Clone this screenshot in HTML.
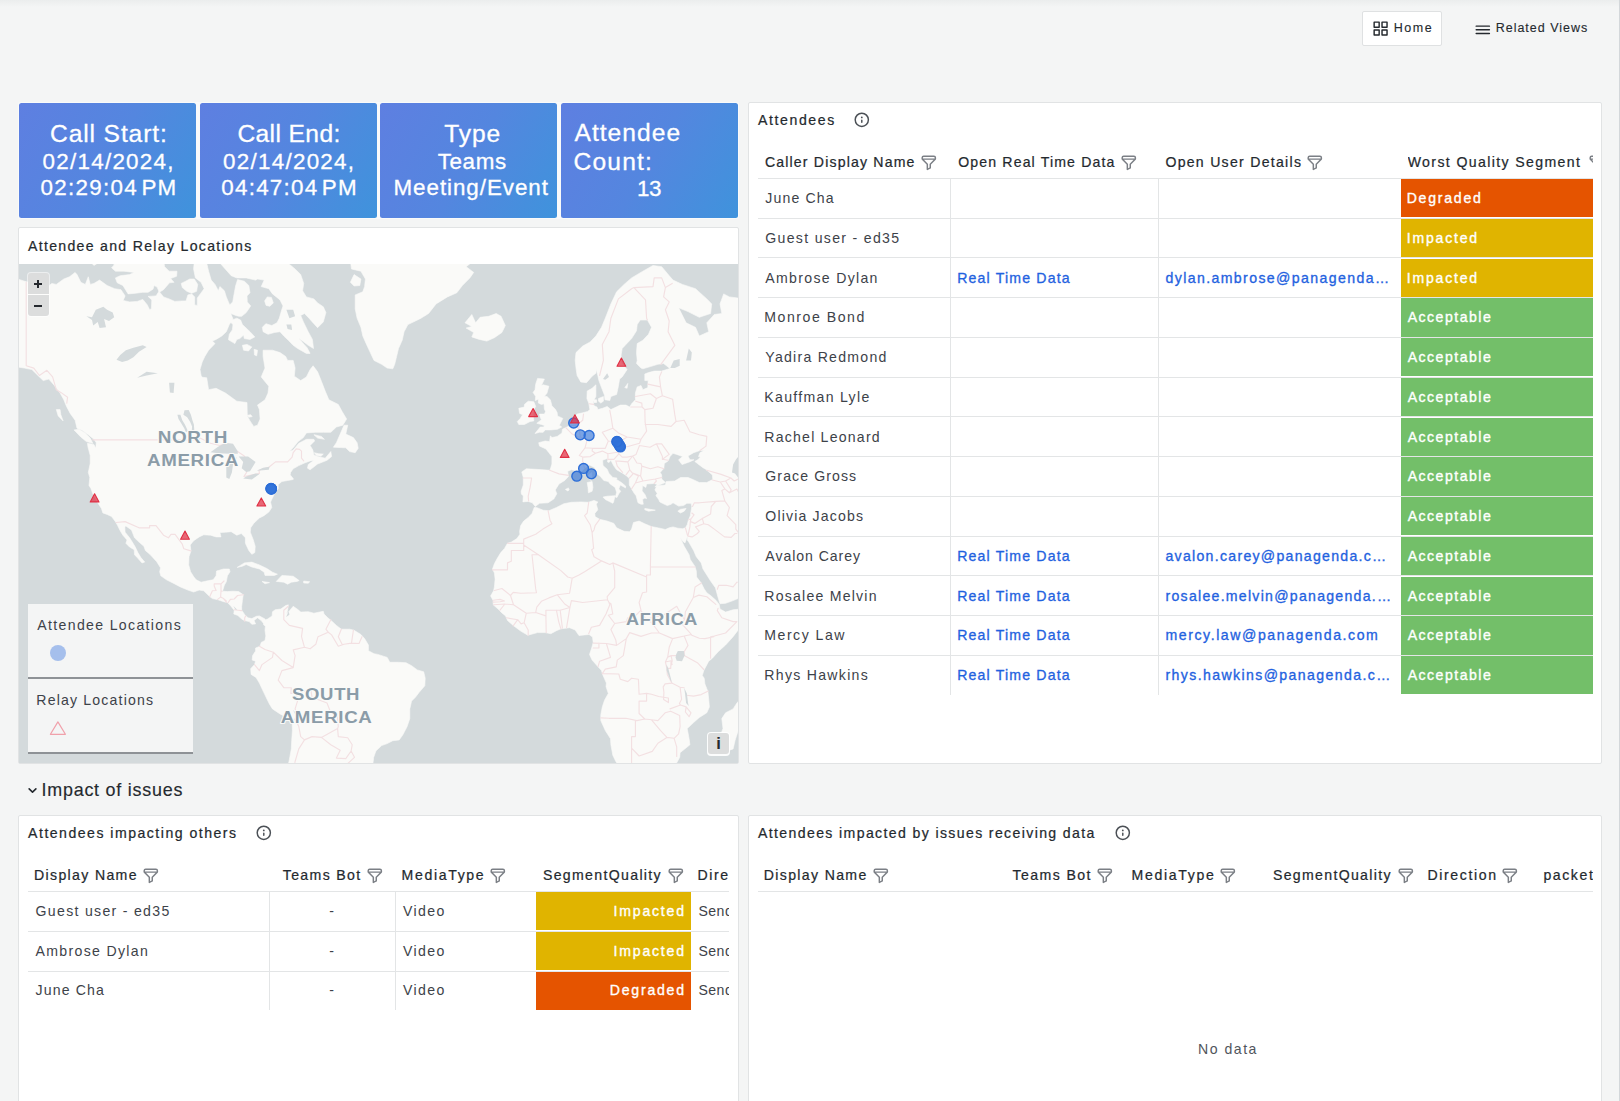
<!DOCTYPE html>
<html><head><meta charset="utf-8"><title>Call details</title>
<style>
html,body{margin:0;padding:0;}
body{width:1620px;height:1101px;overflow:hidden;background:#f4f5f5;position:relative;font-family:"Liberation Sans", sans-serif;}
.t{position:absolute;white-space:pre;display:block;}
.i{position:absolute;}
#top{position:absolute;left:0;top:0;width:1620px;height:7px;background:linear-gradient(#ebeded,#f4f5f5);}
#rs{position:absolute;left:1619px;top:0;width:1px;height:1101px;background:#d3d7da;}
</style></head><body>
<div id="top"></div><div id="rs"></div>
<div style="position:absolute;left:1362px;top:11px;width:80px;height:35px;box-sizing:border-box;background:#fff;border:1px solid #dfe1e2;border-radius:2px;"></div>
<div style="position:absolute;left:18px;top:102px;width:721px;height:117px;background:#f9fafa;border-radius:3px;"></div>
<div style="position:absolute;left:19px;top:103px;width:177px;height:115px;border-radius:2.5px;background:linear-gradient(120deg,#5e7fe1 0%,#5486df 50%,#3f93dc 100%);"></div>
<div style="position:absolute;left:200px;top:103px;width:177px;height:115px;border-radius:2.5px;background:linear-gradient(120deg,#5e7fe1 0%,#5486df 50%,#3f93dc 100%);"></div>
<div style="position:absolute;left:380.3px;top:103px;width:176.99999999999994px;height:115px;border-radius:2.5px;background:linear-gradient(120deg,#5e7fe1 0%,#5486df 50%,#3f93dc 100%);"></div>
<div style="position:absolute;left:561px;top:103px;width:177px;height:115px;border-radius:2.5px;background:linear-gradient(120deg,#5e7fe1 0%,#5486df 50%,#3f93dc 100%);"></div>
<div style="position:absolute;left:18px;top:227px;width:721px;height:537px;box-sizing:border-box;background:#fff;border:1px solid #e1e3e4;border-radius:2px;"></div>
<div style="position:absolute;left:748px;top:102px;width:854px;height:662px;box-sizing:border-box;background:#fff;border:1px solid #e1e3e4;border-radius:2px;"></div>
<div style="position:absolute;left:18px;top:815px;width:721px;height:305px;box-sizing:border-box;background:#fff;border:1px solid #e1e3e4;border-radius:2px;"></div>
<div style="position:absolute;left:748px;top:815px;width:854px;height:305px;box-sizing:border-box;background:#fff;border:1px solid #e1e3e4;border-radius:2px;"></div>
<div style="position:absolute;left:758px;top:177.90px;width:835px;height:1px;background:#e3e5e6;"></div>
<div style="position:absolute;left:1401px;top:179.00px;width:192px;height:38.35px;background:#e55400;"></div>
<div style="position:absolute;left:758px;top:217.65px;width:835px;height:1px;background:#e3e5e6;"></div>
<div style="position:absolute;left:1401px;top:218.75px;width:192px;height:38.35px;background:#e0b400;"></div>
<div style="position:absolute;left:758px;top:257.40px;width:835px;height:1px;background:#e3e5e6;"></div>
<div style="position:absolute;left:1401px;top:258.50px;width:192px;height:38.35px;background:#e0b400;"></div>
<div style="position:absolute;left:758px;top:297.15px;width:835px;height:1px;background:#e3e5e6;"></div>
<div style="position:absolute;left:1401px;top:298.25px;width:192px;height:38.35px;background:#73bf69;"></div>
<div style="position:absolute;left:758px;top:336.90px;width:835px;height:1px;background:#e3e5e6;"></div>
<div style="position:absolute;left:1401px;top:338.00px;width:192px;height:38.35px;background:#73bf69;"></div>
<div style="position:absolute;left:758px;top:376.65px;width:835px;height:1px;background:#e3e5e6;"></div>
<div style="position:absolute;left:1401px;top:377.75px;width:192px;height:38.35px;background:#73bf69;"></div>
<div style="position:absolute;left:758px;top:416.40px;width:835px;height:1px;background:#e3e5e6;"></div>
<div style="position:absolute;left:1401px;top:417.50px;width:192px;height:38.35px;background:#73bf69;"></div>
<div style="position:absolute;left:758px;top:456.15px;width:835px;height:1px;background:#e3e5e6;"></div>
<div style="position:absolute;left:1401px;top:457.25px;width:192px;height:38.35px;background:#73bf69;"></div>
<div style="position:absolute;left:758px;top:495.90px;width:835px;height:1px;background:#e3e5e6;"></div>
<div style="position:absolute;left:1401px;top:497.00px;width:192px;height:38.35px;background:#73bf69;"></div>
<div style="position:absolute;left:758px;top:535.65px;width:835px;height:1px;background:#e3e5e6;"></div>
<div style="position:absolute;left:1401px;top:536.75px;width:192px;height:38.35px;background:#73bf69;"></div>
<div style="position:absolute;left:758px;top:575.40px;width:835px;height:1px;background:#e3e5e6;"></div>
<div style="position:absolute;left:1401px;top:576.50px;width:192px;height:38.35px;background:#73bf69;"></div>
<div style="position:absolute;left:758px;top:615.15px;width:835px;height:1px;background:#e3e5e6;"></div>
<div style="position:absolute;left:1401px;top:616.25px;width:192px;height:38.35px;background:#73bf69;"></div>
<div style="position:absolute;left:758px;top:654.90px;width:835px;height:1px;background:#e3e5e6;"></div>
<div style="position:absolute;left:1401px;top:656.00px;width:192px;height:38.35px;background:#73bf69;"></div>
<div style="position:absolute;left:950px;top:179px;width:1px;height:516px;background:#e3e5e6;"></div>
<div style="position:absolute;left:1158px;top:179px;width:1px;height:516px;background:#e3e5e6;"></div>
<div style="position:absolute;left:28px;top:891.00px;width:700.8px;height:1px;background:#e3e5e6;"></div>
<div style="position:absolute;left:536px;top:892.10px;width:155px;height:38.35px;background:#e0b400;"></div>
<div style="position:absolute;left:28px;top:930.75px;width:700.8px;height:1px;background:#e3e5e6;"></div>
<div style="position:absolute;left:536px;top:931.85px;width:155px;height:38.35px;background:#e0b400;"></div>
<div style="position:absolute;left:28px;top:970.50px;width:700.8px;height:1px;background:#e3e5e6;"></div>
<div style="position:absolute;left:536px;top:971.60px;width:155px;height:38.35px;background:#e55400;"></div>
<div style="position:absolute;left:269px;top:892px;width:1px;height:118px;background:#e3e5e6;"></div>
<div style="position:absolute;left:395px;top:892px;width:1px;height:118px;background:#e3e5e6;"></div>
<div style="position:absolute;left:758px;top:891.0px;width:835px;height:1px;background:#e3e5e6;"></div>
<svg viewBox="0 0 719 499" style="position:absolute;left:19px;top:264px;width:719px;height:499px;overflow:hidden"><rect width="719" height="499" fill="#d4dadc"/>
<g fill="#fafaf8" stroke="#fafaf8" stroke-width="0.6" stroke-linejoin="round">
<path d="M-26.6,8.4L-7.8,12.8L7.2,17.8L14.8,18.8L21.5,25.2L27.9,23.6L32.8,19.4L37.3,20.4L44.8,15.0L50.5,12.8L56.1,8.4L58.0,10.6L61.8,18.3L66.3,20.4L69.3,12.8L71.2,20.4L74.9,19.4L80.6,16.1L88.1,21.5L95.6,24.7L102.0,25.7L106.1,31.9L104.2,36.4L110.6,37.9L118.2,37.4L123.8,35.4L128.3,40.9L130.6,45.7L132.4,44.8L132.8,35.9L129.1,32.4L137.0,31.9L140.0,27.3L144.5,32.9L150.1,34.9L155.8,37.4L163.3,36.9L167.0,36.9L168.9,30.9L172.7,29.9L175.7,32.9L175.7,40.9L178.3,41.4L178.3,33.9L181.3,29.9L185.1,24.7L182.1,18.3L176.4,13.9L174.6,5.0L175.3,-2.0L179.1,-8.0L182.1,-9.2L187.7,-0.8L189.6,7.2L192.2,16.1L196.0,20.4L199.4,26.8L200.9,22.6L205.4,26.8L207.3,32.9L210.7,40.9L213.7,37.9L215.5,27.8L216.7,21.5L218.6,15.6L225.3,17.2L229.8,21.5L231.0,28.8L228.0,31.9L228.3,37.9L231.7,41.9L227.2,48.6L222.7,52.3L219.7,52.3L216.7,51.4L211.8,49.5L214.0,55.1L210.3,60.6L207.3,67.7L202.8,72.0L197.1,75.4L193.4,77.1L196.0,79.6L189.6,86.2L185.8,92.5L183.2,98.0L181.0,105.6L182.1,111.5L183.2,113.3L187.7,113.7L189.6,125.7L197.1,124.3L206.5,129.1L217.8,137.2L228.0,138.5L228.3,151.9L231.0,156.9L234.7,162.4L238.5,161.2L241.1,155.0L240.4,145.6L238.5,141.1L246.0,135.8L249.0,129.1L249.8,122.2L242.2,112.9L246.0,104.1L244.1,92.5L244.1,86.2L253.5,86.2L261.0,88.6L266.7,92.5L268.6,96.4L274.2,96.4L276.1,104.1L275.3,112.2L281.7,116.6L287.4,112.9L291.1,105.6L294.1,101.8L298.6,107.8L302.4,117.3L306.2,127.1L309.9,135.8L319.3,140.4L323.1,147.5L327.6,155.0L323.8,161.2L317.4,163.0L311.8,168.3L304.3,168.3L296.8,168.3L287.4,168.9L284.4,173.6L279.1,177.6L274.6,183.2L270.4,187.6L274.2,186.0L279.8,179.3L287.4,175.3L294.9,175.3L295.6,177.0L291.1,181.5L293.8,186.0L294.9,190.9L298.6,192.6L306.2,194.2L311.8,187.6L312.6,192.6L308.0,196.3L298.6,200.0L291.1,205.8L288.5,204.2L289.2,200.6L294.9,196.3L291.1,196.9L285.5,199.0L279.8,201.6L274.2,204.8L271.6,208.4L271.2,210.9L274.2,214.5L274.2,215.5L268.6,216.5L262.9,217.5L259.2,220.5L259.2,224.9L255.8,228.3L255.0,230.7L252.0,236.9L251.6,238.3L252.8,243.5L249.8,248.1L244.9,251.7L240.4,254.0L234.7,259.4L231.7,263.8L231.3,268.2L234.3,275.9L236.2,282.3L235.8,288.6L232.8,290.3L229.8,286.5L226.4,279.3L226.4,273.8L222.3,269.5L217.8,271.2L212.2,267.7L206.5,268.2L200.9,268.6L202.0,272.9L197.1,272.9L191.5,271.2L184.7,270.8L180.2,272.9L174.6,276.8L171.2,281.0L171.9,286.9L170.0,292.7L169.7,300.9L171.6,307.8L174.9,313.0L177.2,315.8L182.1,318.2L189.6,316.6L194.1,315.8L197.1,311.8L197.5,307.0L204.6,305.0L210.3,305.0L211.0,307.8L208.4,311.8L207.3,317.8L205.4,321.0L203.5,327.2L208.4,327.6L214.0,327.2L219.7,327.6L224.2,330.7L223.4,336.6L222.7,342.3L222.7,346.2L226.1,351.2L229.1,353.8L232.8,354.6L237.4,352.3L240.4,351.9L246.0,355.0L247.1,356.9L245.2,360.3L242.2,356.5L238.5,353.8L235.1,356.5L236.6,359.9L232.8,360.3L230.2,357.6L225.3,356.5L222.7,355.0L218.9,351.5L214.8,350.0L215.2,346.2L211.4,341.6L208.4,338.5L204.6,337.7L199.0,335.8L193.4,334.6L190.4,332.3L184.7,326.8L180.2,326.1L174.6,328.0L168.9,326.1L161.4,322.9L153.9,319.0L147.5,315.8L141.8,311.8L140.7,307.8L141.5,303.8L137.7,297.7L131.3,290.7L126.4,286.5L124.9,282.3L120.0,278.1L115.5,273.8L112.5,266.0L106.9,262.0L105.8,262.9L106.1,268.2L110.6,273.8L113.3,278.1L116.3,283.1L118.9,288.6L121.9,293.6L125.7,298.1L123.0,298.9L118.2,293.6L115.5,290.7L115.2,285.7L110.6,283.1L106.9,279.3L108.0,275.9L103.9,271.2L101.2,266.8L98.6,261.6L96.7,258.0L92.6,252.6L88.1,250.4L83.9,249.0L82.4,244.4L78.7,238.8L76.8,234.6L73.8,229.8L71.9,224.4L70.0,221.5L70.8,213.5L69.3,208.4L71.2,199.5L71.2,191.5L68.9,182.7L68.5,179.3L74.9,180.4L76.8,184.3L77.2,178.7L74.9,175.3L69.3,170.7L63.6,166.5L58.0,164.2L56.1,156.3L51.2,149.4L47.5,142.4L44.8,135.8L41.1,129.1L35.4,121.5L29.8,115.1L24.2,116.6L20.4,112.9L12.9,105.6L5.4,104.1L-7.8,101.8L-11.6,96.4L-26.6,100.3Z"/>
<path d="M73.8,179.3L67.4,177.6L61.8,173.0L55.0,165.9L59.9,165.3L66.3,168.9L71.2,174.1Z"/>
<path d="M41.1,145.6L37.3,145.6L39.2,151.9L44.1,156.9L41.8,150.7Z"/>
<path d="M199.0,-3.2L212.2,11.7L217.8,13.9L227.2,13.9L236.6,16.1L238.5,15.0L245.2,16.1L242.2,22.6L249.8,24.7L253.5,29.9L257.3,32.9L261.0,35.9L264.0,41.9L262.2,47.6L260.3,54.2L258.0,58.8L252.8,61.5L246.8,59.7L243.4,63.3L244.1,67.7L249.0,70.3L255.4,68.5L261.0,67.7L264.8,72.0L269.3,76.2L274.2,81.3L278.7,84.5L287.4,89.4L291.1,89.4L288.1,83.7L283.6,78.8L279.5,74.1L283.6,77.1L289.2,81.3L294.5,84.5L293.4,75.4L289.2,67.7L284.4,57.9L281.7,51.4L285.5,49.5L290.0,54.2L294.9,59.7L298.6,63.7L304.3,57.9L306.9,48.6L304.3,42.8L298.6,38.9L294.9,34.9L287.4,32.9L283.6,26.8L284.7,19.4L281.7,10.6L276.1,5.0L270.4,0.3L264.8,-5.6L251.6,-19.1L244.1,-21.7L232.8,-30.9L217.8,-32.2L206.5,-28.2L199.0,-15.4Z"/>
<path d="M210.3,57.0L217.8,54.2L221.6,56.0L223.4,60.6L231.0,67.7L235.8,72.9L231.0,75.4L225.3,74.6L224.6,71.1L220.8,74.6L217.8,75.4L215.9,79.6L209.5,75.8L210.3,70.3L213.3,65.9L214.0,60.6Z"/>
<path d="M91.8,-4.4L95.2,0.9L92.6,3.8L96.4,7.2L105.0,7.2L115.2,8.4L110.6,10.6L101.2,11.7L96.4,13.9L98.2,18.8L103.9,21.5L109.1,29.9L116.3,29.3L123.8,28.3L129.1,28.3L134.0,25.2L135.1,21.5L138.1,23.1L140.3,28.3L144.5,25.7L150.5,18.8L155.0,18.3L151.6,14.5L157.6,12.3L158.0,7.2L150.1,7.2L145.6,2.7L144.5,-4.4L142.6,-15.4L135.1,-25.6L120.0,-19.1L108.8,-21.7L93.7,-17.9Z"/>
<path d="M65.5,-9.2L74.9,1.5L82.4,-3.2L86.2,-15.4L78.7,-34.9L67.4,-34.9Z"/>
<path d="M163.3,23.6L167.8,27.3L172.7,29.3L177.6,27.3L178.7,20.4L175.3,15.0L170.8,15.0L166.7,17.2L162.2,19.4Z"/>
<path d="M245.6,36.9L248.3,32.9L252.4,33.4L254.3,38.9L250.9,42.3L247.1,41.4Z"/>
<path d="M223.4,81.3L228.0,80.4L232.8,82.9L229.5,87.0L224.6,86.2Z"/>
<path d="M235.1,85.3L238.5,86.2L237.7,91.8L235.5,91.0Z"/>
<path d="M228.0,151.3L231.7,150.7L233.2,152.6L229.8,153.2Z"/>
<path d="M331.4,18.3L335.1,10.6L341.9,15.0L340.8,21.5L335.1,22.0Z"/>
<path d="M294.9,170.7L302.4,172.4L305.4,175.3L298.6,174.1Z"/>
<path d="M295.3,188.7L299.8,189.8L304.3,190.1L302.0,192.3L297.5,191.5Z"/>
<path d="M153.9,-3.2L165.2,-0.8L174.6,-9.2L184.0,-11.6L187.7,-21.7L176.4,-34.9L153.9,-28.2Z"/>
<path d="M326.8,-21.7L330.6,-9.2L332.5,5.0L341.9,7.2L346.4,15.0L345.6,22.6L343.8,27.8L336.2,30.9L336.2,44.8L338.1,54.2L341.9,63.3L343.8,72.0L347.5,80.4L351.3,88.6L355.0,96.4L362.6,100.3L368.2,104.1L373.8,104.8L375.7,100.3L377.6,92.5L379.5,84.5L383.2,76.2L385.1,67.7L388.9,60.6L396.4,57.0L402.0,54.2L409.6,49.5L417.1,39.9L428.4,32.9L437.8,28.8L443.4,21.5L450.9,13.9L454.7,8.4L447.2,2.7L454.7,-3.2L454.7,-21.7Z"/>
<path d="M446.0,58.8L452.8,50.5L456.6,58.8L461.1,53.3L469.7,52.3L477.2,49.5L482.1,52.3L486.3,61.5L482.9,68.5L475.4,73.7L467.8,77.1L460.3,75.4L452.8,72.9L454.7,68.5L447.2,64.1L452.8,62.4Z"/>
<path d="M314.4,183.2L317.4,178.7L321.2,170.1L325.0,161.2L328.7,161.2L326.8,170.1L334.4,173.6L338.1,178.7L339.2,184.3L336.2,188.7L330.6,187.6L326.8,183.8Z"/>
<path d="M218.2,303.4L225.3,298.9L232.8,298.1L240.4,300.9L247.9,304.6L253.5,308.2L258.4,310.2L255.4,311.4L246.0,311.4L245.2,308.2L240.4,305.0L232.8,303.0L227.2,300.5L223.4,302.2Z"/>
<path d="M257.3,317.4L262.9,311.4L267.8,311.8L274.2,312.2L280.2,316.6L278.0,317.4L272.3,318.2L268.6,320.2L264.8,318.2Z"/>
<path d="M243.0,317.4L250.5,318.6L246.0,319.8Z"/>
<path d="M284.7,317.0L290.7,317.8L289.2,319.2L284.7,319.0Z"/>
<path d="M244.5,360.7L246.8,355.7L248.6,355.0L253.1,351.9L253.5,347.7L256.2,345.8L261.8,345.0L266.7,341.6L269.3,340.8L268.6,346.2L267.4,350.0L270.4,346.9L274.2,342.3L279.8,346.2L281.7,348.1L289.2,347.7L294.9,349.2L304.3,347.3L305.0,350.0L308.8,353.8L312.6,356.9L317.4,361.4L322.3,365.2L330.6,365.2L335.1,366.3L341.9,370.5L345.6,374.6L349.4,381.0L349.4,386.7L355.0,389.7L358.8,390.4L368.2,393.4L370.8,398.3L379.5,398.3L387.0,398.7L392.6,401.7L398.3,405.9L404.7,407.8L406.2,414.2L405.8,421.8L400.2,428.3L396.4,433.3L392.6,437.1L390.8,444.9L390.8,454.6L388.1,462.6L384.0,470.6L380.2,475.9L373.8,476.7L368.2,479.6L362.6,481.6L356.9,487.0L354.7,493.3L353.9,499.7L350.2,504.0L347.5,510.5L347.5,528.4L268.6,528.4L268.6,510.5L268.6,504.0L270.4,495.4L272.3,484.9L272.7,476.7L273.4,466.6L273.1,458.6L268.6,453.9L261.0,449.9L253.5,444.9L250.5,440.2L247.1,433.3L243.4,425.6L240.4,419.1L237.0,413.4L232.1,410.4L231.7,404.7L235.5,400.6L236.6,397.2L233.2,396.1L233.6,391.6L236.6,387.0L236.6,384.0L241.1,382.2L242.2,378.4L246.0,376.5L246.8,372.0L246.0,366.3L246.4,362.2Z"/>
<path d="M763.0,29.9L744.2,29.9L725.4,34.9L710.4,32.9L704.7,29.9L701.0,39.9L702.8,49.5L695.3,50.5L687.8,58.8L689.7,67.7L680.3,72.0L676.5,63.3L667.1,58.8L659.6,43.8L669.0,47.6L680.3,53.3L691.6,49.5L692.7,39.9L687.8,34.9L676.5,24.7L663.4,20.4L654.0,16.1L650.2,11.7L642.7,2.7L634.0,1.5L623.9,7.2L612.6,13.9L605.1,20.4L597.6,27.8L591.9,39.9L586.3,54.2L582.5,63.3L576.9,72.0L571.2,77.9L563.7,82.1L557.0,88.6L556.2,96.4L557.0,104.1L558.1,111.5L561.8,118.0L567.5,118.7L573.1,112.2L576.9,109.3L577.3,105.6L578.8,111.5L579.9,116.6L582.5,123.6L585.5,131.2L585.9,135.8L590.8,136.5L591.9,132.5L597.6,130.5L599.4,122.2L600.6,115.1L603.2,112.9L608.1,105.6L602.4,98.8L602.1,91.0L603.2,84.5L607.0,80.4L612.6,74.6L617.5,66.8L618.2,60.6L621.2,56.0L628.4,56.0L632.5,63.3L629.5,70.3L623.9,76.2L618.2,79.6L617.5,88.6L618.2,96.4L617.5,99.5L622.0,104.1L623.9,104.8L631.4,102.6L638.9,100.3L644.6,99.5L651.0,104.5L642.7,107.1L635.2,107.1L629.5,108.6L625.8,110.0L625.8,116.6L629.1,116.6L628.8,123.6L623.9,125.7L622.0,121.5L618.2,122.9L616.4,129.1L616.4,135.8L612.6,139.8L610.7,143.0L607.0,141.1L601.3,141.1L591.9,145.6L588.2,142.4L583.6,144.3L578.8,145.6L578.0,143.0L575.0,141.7L574.2,137.2L576.9,132.5L576.9,125.7L576.9,120.8L573.1,124.3L568.2,127.1L567.9,134.5L569.7,139.1L570.9,145.6L568.6,147.5L563.7,148.8L558.1,150.1L555.4,152.6L553.2,158.1L550.6,161.8L546.8,163.6L543.4,165.3L543.0,168.9L538.2,172.4L532.9,173.6L531.4,171.8L530.6,177.6L526.1,177.0L519.7,178.7L520.5,182.1L526.9,184.9L529.5,188.2L532.9,192.6L532.9,200.0L531.0,206.3L524.2,205.8L516.7,205.3L507.3,204.8L502.8,207.9L504.3,213.5L504.3,221.0L502.1,227.3L502.4,230.2L504.3,231.7L503.9,237.9L509.2,237.4L513.3,238.8L516.3,242.5L520.5,239.3L529.1,238.8L534.8,235.0L537.8,229.8L536.3,225.9L540.0,220.0L545.7,216.5L549.4,212.5L548.7,207.3L552.4,205.8L557.3,206.8L562.6,207.3L565.6,204.2L570.5,201.1L575.8,203.7L576.9,208.9L581.4,212.5L584.8,216.5L589.3,217.5L591.2,220.0L596.1,223.4L597.6,228.3L596.4,233.1L597.9,233.6L599.8,229.8L601.7,227.3L599.8,224.9L601.3,221.0L606.6,223.9L606.6,222.0L602.4,218.5L597.6,215.5L597.9,214.0L593.8,213.5L590.0,209.4L588.2,205.3L584.0,201.6L583.6,196.3L588.9,194.2L588.5,197.9L590.0,198.5L591.9,196.3L594.6,201.6L597.6,205.8L603.2,208.9L607.0,211.4L610.3,214.5L610.3,221.0L612.6,224.9L615.2,229.3L617.1,231.7L619.0,238.8L622.0,240.2L624.3,240.2L623.5,235.5L625.8,234.1L627.6,234.6L626.1,230.7L623.1,226.9L623.5,221.5L626.9,223.4L627.6,220.0L635.2,219.5L638.2,220.5L635.9,223.0L638.9,221.5L646.4,218.5L642.7,215.0L642.7,210.9L641.2,208.4L644.9,204.2L645.3,199.5L649.1,196.9L651.0,192.6L654.0,189.3L657.7,190.4L663.7,192.6L659.6,195.8L663.0,200.6L670.5,197.9L675.0,195.8L670.9,195.8L669.0,192.0L674.6,188.7L681.0,186.5L685.2,186.5L681.0,188.7L679.5,192.6L681.4,193.1L678.8,195.8L675.8,197.4L678.4,199.5L684.0,203.7L686.7,205.3L693.4,210.9L693.8,215.5L687.8,218.5L680.3,218.5L672.8,215.0L669.0,213.5L661.5,213.5L655.8,217.0L647.2,217.5L646.4,221.0L640.8,221.5L637.8,222.0L635.9,225.9L638.2,229.3L637.0,231.7L639.7,235.5L640.8,237.9L643.4,239.3L648.3,241.6L652.1,240.2L654.0,238.8L659.6,242.1L664.5,241.6L667.9,239.3L672.0,239.3L672.8,242.5L672.0,247.2L671.3,251.7L669.4,256.2L668.2,260.7L666.4,263.8L663.4,264.7L658.8,264.2L654.0,262.9L650.2,263.8L646.4,265.5L640.8,264.2L632.2,262.5L625.8,259.8L620.1,257.1L614.5,258.5L612.6,265.1L610.7,267.7L605.1,267.3L597.6,263.8L594.9,259.4L588.2,257.1L580.6,255.3L576.1,252.6L575.8,249.4L578.8,245.8L577.3,240.2L578.8,237.9L575.0,236.4L569.4,238.3L561.8,237.9L552.4,238.3L544.9,239.7L537.4,243.5L529.9,246.7L524.2,246.2L517.5,243.5L515.2,243.5L513.0,249.4L509.2,253.5L504.7,257.1L501.7,261.6L500.6,267.3L500.9,270.3L497.9,274.6L492.3,278.1L488.5,279.3L485.5,284.4L481.8,288.6L478.0,294.8L475.4,299.7L473.5,305.0L475.4,309.0L476.1,315.0L475.4,322.9L474.6,326.8L471.6,331.9L474.2,336.6L474.2,340.8L479.1,345.0L482.9,348.9L486.6,351.9L488.5,356.5L494.2,361.4L501.7,367.1L508.8,371.2L518.6,368.6L526.1,368.6L531.8,369.7L537.4,366.7L541.9,364.8L550.6,363.7L556.2,366.0L560.0,371.6L565.6,370.9L570.1,370.5L573.5,373.1L574.2,378.4L572.7,384.0L570.5,390.4L573.1,396.1L578.8,402.5L582.5,406.6L583.6,410.4L587.4,419.1L587.0,422.5L589.3,429.4L585.5,436.3L583.3,442.9L581.8,450.7L581.8,456.6L586.3,466.6L591.5,474.7L591.9,480.8L593.8,491.2L596.8,497.5L599.4,501.0L601.3,506.1L605.1,514.9L605.1,533.1L654.0,533.1L654.0,505.7L660.7,493.3L661.1,488.7L670.9,480.8L670.1,474.7L668.2,464.6L674.6,458.6L680.3,453.5L687.8,448.8L690.4,442.9L689.7,435.2L688.9,427.5L685.9,419.9L685.2,414.2L683.3,411.5L684.8,406.6L686.7,402.9L689.7,397.2L693.4,394.2L699.1,387.8L706.6,381.0L714.1,372.7L719.8,365.2L725.4,355.7L729.2,348.1L729.9,342.7L721.6,345.0L714.1,345.8L706.6,348.1L701.0,345.0L700.2,340.4L697.2,336.6L691.6,331.5L687.8,328.8L685.2,324.9L682.2,319.0L677.6,313.0L677.3,307.0L675.8,302.2L671.3,295.6L670.1,290.7L665.2,282.3L662.6,276.8L660.0,269.9L661.5,273.8L663.7,277.2L666.0,278.9L667.1,275.9L668.6,271.6L668.2,275.9L669.8,278.1L674.6,286.5L677.3,292.7L682.2,298.9L684.0,305.0L687.8,311.0L691.6,317.0L696.4,323.7L698.3,330.7L700.2,337.3L701.0,339.7L706.6,339.3L714.1,336.6L721.6,333.5L729.2,329.6L733.7,326.1L744.2,321.0L763.0,303.0Z"/>
<path d="M516.0,169.5L520.5,168.3L524.2,168.3L526.1,165.9L531.8,165.9L538.5,165.3L542.7,163.0L540.4,161.2L543.8,154.4L538.5,151.9L538.2,148.8L536.6,145.6L532.9,141.7L531.4,135.8L528.0,132.5L525.4,132.5L528.0,129.1L529.9,122.2L524.2,120.8L522.4,121.5L525.4,115.1L518.6,114.4L516.7,120.1L516.0,125.7L514.1,128.4L516.7,132.5L516.3,136.5L519.4,135.2L519.4,139.1L522.4,140.4L525.0,139.8L525.4,145.0L526.5,147.5L525.4,150.1L520.5,150.1L521.2,153.2L522.4,155.7L517.8,159.3L522.4,160.5L526.1,161.8L527.2,160.5L524.2,163.0L521.2,163.0Z"/>
<path d="M514.8,156.9L514.1,150.1L514.8,145.6L516.7,142.4L514.8,137.8L509.2,137.2L505.4,140.4L505.4,143.0L499.8,144.3L500.6,149.4L503.6,150.7L501.3,154.4L498.3,157.5L499.8,160.5L505.4,160.5L511.1,157.5Z"/>
<path d="M584.0,233.1L588.2,232.2L596.1,231.7L594.6,237.9L593.8,239.3L586.3,235.5Z"/>
<path d="M568.2,218.5L573.1,217.5L573.9,223.4L573.1,227.3L569.4,228.8L569.0,223.4Z"/>
<path d="M569.7,210.9L572.7,208.4L573.1,213.5L572.0,216.5L570.1,214.5Z"/>
<path d="M625.8,244.4L631.4,245.3L636.3,246.2L629.5,247.2L625.8,245.8Z"/>
<path d="M658.8,247.2L661.5,245.3L667.1,244.4L665.2,247.2L661.5,249.0Z"/>
<path d="M546.4,225.4L549.4,223.9L550.2,225.9L548.7,226.9Z"/>
<path d="M579.5,134.5L584.4,132.5L584.4,137.2L581.8,139.1L579.5,137.2Z"/>
<path d="M574.2,135.8L577.6,135.8L577.6,138.5L575.0,138.5Z"/>
<path d="M605.8,123.6L608.8,119.4L608.1,124.3Z"/>
<path d="M722.8,433.3L726.5,446.8L723.5,452.7L719.8,464.6L716.0,476.7L714.1,484.9L708.5,487.0L702.8,484.9L700.2,474.7L704.0,464.6L702.8,454.6L706.6,448.8L714.1,444.9L717.9,439.0Z"/>
</g>
<g fill="none" stroke="#f3e0e2" stroke-width="1.15" stroke-linejoin="round" stroke-linecap="round">
<path d="M73.8,175.9L179.4,175.9L181.0,174.1L191.5,179.3L200.9,181.5L205.4,179.8L218.6,187.6L225.3,192.0L227.6,196.3L227.6,208.4L224.9,212.5L240.4,209.4L240.0,206.3L249.8,203.2L256.5,197.9L268.6,197.9L273.1,193.1L274.2,188.7L277.2,184.9L280.6,185.4L282.5,187.1L282.5,194.2L284.7,196.9M7.2,18.3L7.2,101.8L14.8,104.1L20.4,111.5L27.9,106.3L33.6,112.9L37.3,125.7L41.8,128.4L48.6,133.2L47.8,139.1M97.1,258.5L106.1,257.6L120.0,263.8L130.6,263.8L130.6,261.6L137.0,261.6L144.5,271.2L149.4,273.8L152.0,270.3L156.1,270.3L163.3,280.2L164.8,284.8L171.9,286.9M190.7,332.7L193.4,326.8L197.1,326.5L195.2,322.1L195.2,319.8L202.0,319.8L202.0,326.8L203.1,327.2M202.0,319.8L205.0,317.0M202.0,326.8L201.6,333.1L198.6,335.4M201.6,333.1L204.6,334.6L207.3,337.0M204.6,334.6L207.6,338.5M209.2,338.5L211.4,335.4L215.2,335.0L218.6,331.5L224.6,330.7M215.2,345.8L218.9,346.2L222.7,346.6M225.7,357.2L225.7,353.8L226.8,351.9M269.3,342.3L264.8,346.2L264.8,355.7L270.4,361.4L283.6,364.4L282.5,372.7L285.5,383.3M285.5,383.3L291.1,384.8L296.8,380.3L299.0,372.7L309.2,368.2L306.9,365.2L311.8,355.7M309.2,368.2L312.6,370.9L319.3,382.2L325.0,380.3L332.5,379.1L340.0,379.5L343.0,372.7M322.3,365.2L319.3,372.7L323.1,380.3M334.4,366.0L332.5,379.1M285.5,383.3L274.2,385.9L276.1,391.6L274.2,403.6L262.9,396.5L254.3,388.2L246.0,385.5L240.4,382.2M254.3,388.2L253.5,393.4L243.0,400.6L240.4,406.6L235.5,400.6M274.2,403.6L262.9,406.6L259.2,416.1L264.8,423.7L272.3,423.7L271.9,429.4L276.1,429.4M276.1,429.4L279.1,435.2L276.1,444.9L278.0,450.7L276.1,454.6L273.1,457.8M276.1,429.4L291.9,425.6L293.0,433.3L308.0,439.0L311.8,448.8L318.2,449.9L319.3,462.6L318.6,464.6M276.1,454.6L279.8,462.6L281.7,472.6L285.5,475.9L293.0,472.6L302.4,473.4L318.6,464.6M302.4,473.4L311.8,480.8L321.2,486.2L317.4,494.1L326.8,494.6L332.1,487.0L333.2,480.8L328.7,473.8L319.3,472.6L318.6,464.6M285.5,475.9L279.8,484.9L276.1,497.5L274.2,510.5M332.1,487.0L335.5,493.3L320.8,507.0M529.1,246.7L531.0,256.2L532.9,259.8L523.9,265.1L516.7,270.3L504.7,275.1L504.7,281.0M504.7,279.3L488.5,279.3M504.7,281.0L504.7,286.5L492.3,286.5L492.3,297.3L488.5,298.9L488.5,305.8L473.5,305.8M504.7,281.0L519.4,290.7L513.0,290.7L516.7,324.9L517.5,328.8L501.7,329.2L494.2,328.4L491.5,331.5M519.4,290.7L541.9,306.6L548.7,313.0L553.2,314.2L560.0,311.0L565.6,307.8L582.5,296.9M569.7,238.3L568.2,249.0L565.6,251.7L571.2,260.7L573.1,268.6L574.6,284.4L572.7,285.7L575.0,292.7L582.5,296.9M580.6,255.3L576.1,261.6L575.0,266.0L573.1,268.6M632.2,262.5L631.4,303.0L676.1,303.0M631.4,303.0L631.4,311.0L627.6,311.0L627.6,328.0L623.5,328.8L620.1,338.5L622.0,346.2L626.5,355.0M582.5,296.9L590.8,300.5L593.8,298.9L627.6,313.0M593.8,298.9L595.7,307.0L595.7,323.7L588.2,332.7L588.5,335.8L590.0,338.5L591.9,339.7M475.4,326.5L482.9,324.5L491.5,331.5L494.5,340.8L485.9,340.0L474.6,340.8M474.2,336.2L481.0,335.4L485.5,337.0L481.0,337.7L474.2,338.1M481.0,346.2L485.9,340.0M494.5,340.8L507.3,349.2L505.1,358.8L502.1,359.9L498.7,355.7L487.4,353.8M498.7,355.7L494.2,361.8M505.1,358.8L509.2,366.0L509.2,371.2M507.3,349.2L516.7,348.5L526.9,351.9L527.2,368.6M537.4,346.2L539.7,357.6L541.9,364.8M541.2,346.2L543.4,364.1M550.9,343.5L547.6,363.7M516.7,348.5L517.8,343.1L522.4,337.3L529.9,333.9L538.2,330.7L545.7,340.0L550.9,343.5L541.2,346.2L537.4,346.2L526.9,346.2L526.9,351.9M538.2,330.7L550.6,329.2L553.2,314.2M550.9,343.5L552.4,336.6L563.7,338.5L575.0,337.3L588.5,335.8M590.0,338.5L590.8,340.8L587.0,350.0L580.6,361.4L572.4,363.3L569.7,369.7M591.9,339.7L593.8,350.0L589.3,351.2L595.7,359.5L591.9,365.6L596.8,376.1L597.6,381.4M595.7,359.5L607.3,357.6L608.8,353.8L616.4,351.9L622.0,346.2M626.5,355.0L632.5,358.4L640.4,369.0L632.5,369.0L622.0,372.4L610.7,368.6L607.3,374.6L597.6,381.4M574.2,379.1L587.4,379.5L597.6,381.4M579.9,379.1L579.9,384.0L574.2,384.0M587.4,379.5L591.5,393.4L580.6,397.2L579.1,402.5M607.3,374.6L604.3,391.6L598.3,396.1L597.2,402.9L586.3,405.1L583.3,409.6M583.3,409.6L599.8,410.0L601.3,415.3L608.8,417.6L612.6,414.2L619.4,415.3L620.1,430.2L627.6,429.4L627.6,437.1L620.1,437.1L620.1,449.5L625.8,455.0L617.9,456.6L607.0,454.3L590.0,454.3L581.8,453.9M640.4,369.0L653.6,374.6L650.2,383.3L648.7,393.1L646.4,398.0L647.9,404.4L648.3,410.4L652.8,419.1L646.1,419.9L644.2,422.9L644.9,428.3L644.6,435.6L649.4,438.6L649.4,434.0L639.7,432.5L632.5,430.2L627.6,429.4M626.5,355.0L629.5,355.0L637.0,351.9L642.7,352.3L657.7,342.3L661.5,349.2L665.6,355.7L661.5,358.4L670.1,367.8L672.4,370.5L665.2,372.0L653.6,374.6M665.6,355.7L666.4,347.7L674.3,333.5L676.1,322.9L682.5,319.0M674.3,333.5L679.9,331.1L687.8,332.7L696.8,340.4M699.1,344.3L698.3,346.6L702.8,353.8L714.1,357.6L717.9,357.6L706.6,369.0L695.3,372.0L691.6,372.7L691.6,394.2M694.9,372.7L685.9,374.6L680.3,374.3L672.8,371.2L672.4,370.5M665.2,372.0L669.0,381.4L665.2,387.8L665.2,391.6L678.8,399.1L684.8,405.5M665.2,391.6L652.1,391.6L648.7,393.1M652.1,391.6L653.2,396.8L652.1,401.0L653.2,400.2M646.4,398.0L652.1,396.8L651.7,404.4L647.9,404.4M652.8,419.1L661.1,423.3L665.2,423.7M667.5,431.3L674.6,432.1L682.2,430.6L689.3,427.1M661.1,423.3L662.6,435.2L660.4,439.4L661.5,441.0L667.1,442.9L672.0,448.8L670.1,452.7L666.4,448.0L667.1,442.9M651.0,444.9L661.5,441.0M651.7,447.2L660.7,451.5L661.1,462.6L659.6,469.8L655.1,474.3L657.7,482.9L657.7,492.5M632.5,455.8L638.9,456.6L646.1,448.8L651.7,447.2M616.4,456.6L616.4,472.6L612.6,472.6L612.6,484.1L612.6,499.2M599.4,500.1L612.6,499.2M612.6,484.1L620.1,492.0L633.3,487.4L638.9,479.2L647.9,473.4L655.1,474.3M632.5,455.8L641.6,466.6L647.9,473.4M625.8,455.0L632.5,455.8M666.4,263.8L668.6,271.6M504.3,214.0L512.6,214.0L511.1,223.4L509.2,232.2L509.6,236.9M530.6,206.3L540.0,209.9L549.4,211.4M565.6,204.2L563.7,197.9L563.7,193.1L560.3,191.5L566.0,183.8L568.2,175.9L561.5,173.0L559.2,173.0L553.2,170.1L546.8,163.6M550.2,161.8L556.2,161.2L560.0,165.3L561.5,173.0M560.0,165.3L560.0,159.3L563.7,156.3L564.5,150.1M570.1,139.8L574.6,140.4M590.8,146.3L592.3,154.4L593.8,164.2L583.3,168.3L589.3,177.0L586.3,184.3L576.9,184.3L573.5,184.3L566.0,183.8M563.7,193.1L571.2,192.6L576.5,189.3L583.3,187.1L588.9,189.8L588.9,194.2M573.5,184.3L573.1,187.1L576.5,189.3M593.8,164.2L599.4,168.9L608.1,173.0L622.0,175.3L627.6,167.1L626.1,158.1L625.8,145.6L623.1,143.0L611.8,143.0M589.3,177.0L600.9,177.6L601.7,181.5L599.4,187.1L598.3,188.2L588.9,189.8M600.9,177.6L608.1,173.0M601.7,181.5L608.1,182.7L620.5,179.3L622.0,175.3M598.3,188.2L603.2,193.1L608.1,193.1L613.7,192.0L617.1,190.4L620.5,181.5M588.9,195.3L594.9,195.3L599.4,190.4M596.8,196.9L608.8,197.9L609.6,201.1L610.7,205.8L607.0,210.9M596.8,196.9L598.3,202.1L603.6,208.4M610.3,214.0L614.5,209.4L621.6,212.0L623.9,217.0L616.4,219.0L612.6,224.9M610.7,205.8L613.7,209.4L614.5,209.4M614.5,209.4L619.4,212.0L616.4,219.0M621.6,212.0L622.8,202.1L622.0,199.5L617.9,199.0L613.7,192.0M608.8,197.9L613.7,192.0M622.8,202.1L631.4,204.8L638.9,202.7L644.9,204.8M623.9,217.0L636.3,215.0L637.4,217.0L635.2,219.5M636.3,215.0L642.7,213.5M620.5,181.5L631.0,183.2L637.4,179.8L643.4,192.6L643.4,195.3L649.1,196.3M637.4,179.8L642.7,179.8L650.2,190.4L643.4,195.3M626.1,160.5L638.9,160.5L652.1,162.4L657.0,157.5L665.2,156.3L670.9,167.7L680.3,170.7L687.8,172.4L687.0,182.1L681.0,186.5M625.8,145.6L634.0,144.3L637.4,134.5L643.4,131.8L653.6,135.2L655.8,150.7L657.0,157.5M616.4,132.5L631.4,129.8L637.4,134.5M643.4,131.8L641.6,122.9L628.8,120.1M641.6,122.9L640.4,112.9L642.7,107.8M623.1,143.0L622.8,139.1L616.7,137.2M580.6,111.5L584.4,96.4L583.3,80.4L590.0,67.7L591.9,54.2L599.4,34.9L612.6,24.7L614.9,23.6M614.9,23.6L626.5,35.9L627.6,54.2L628.4,56.0M614.9,23.6L634.0,22.6L635.2,13.9L642.7,13.9L646.4,23.6L644.6,32.9L650.2,37.9L646.4,45.7L650.2,57.0L649.1,67.7L655.8,81.3L641.9,100.3M646.4,23.6L653.2,19.4M673.5,242.5L675.4,238.8L680.3,238.8L696.8,237.4L705.8,236.9L702.8,226.4L705.8,224.9L701.3,218.0L693.4,216.0M687.8,206.3L702.1,210.4L711.9,214.0L715.2,217.0L720.1,214.5M701.3,218.0L706.6,217.0L711.9,214.0M706.6,217.0L712.2,225.9L710.4,228.8L705.8,224.9M710.4,228.8L717.9,224.9L721.3,231.2M705.8,236.9L710.4,243.5L708.1,251.7L716.8,260.7L716.8,265.1L720.1,269.5M672.8,249.0L675.0,250.8L672.0,254.9L671.3,257.6L670.9,262.9L669.0,271.6M669.4,255.8L672.0,254.9M696.8,237.4L692.3,242.5L691.6,249.9L683.3,254.4L675.8,259.4L671.6,257.6M683.3,254.4L684.8,259.8L676.5,262.9L680.3,267.3L678.4,269.5L673.1,272.9L669.0,272.1M684.8,259.8L689.3,260.7L695.3,265.1L705.5,272.9L712.2,273.4L716.0,269.5L717.9,269.5M698.3,325.3L699.8,321.3L707.4,321.3L714.1,322.9L717.9,318.2L732.9,315.0"/>
</g>
<g fill="#d4dadc">
<path d="M714.1,200.6L713.0,208.4L716.0,209.4L719.8,214.5L722.8,221.0L726.5,222.0L721.6,228.3L721.6,235.0L726.2,236.9L732.9,238.8L740.4,235.5L738.6,225.9L735.9,216.0L736.7,208.4L729.2,200.6L731.0,195.3L736.7,188.2L729.2,187.1L721.6,189.8L717.1,195.3Z"/>
<path d="M191.5,188.2L199.0,182.7L206.5,178.7L214.0,179.8L218.6,187.1L218.9,189.8L210.3,189.8L199.0,189.3Z"/>
<path d="M207.3,213.5L210.3,215.0L212.9,208.4L214.0,200.6L217.8,193.6L212.2,195.3L207.3,200.6Z"/>
<path d="M219.7,192.6L229.1,192.6L236.6,197.9L231.0,207.3L227.2,207.9L222.7,204.2L224.2,197.9Z"/>
<path d="M224.2,214.5L232.8,215.5L240.4,209.9L236.6,209.4L227.2,212.5Z"/>
<path d="M237.7,206.8L249.8,205.8L250.5,202.7L244.1,203.7Z"/>
<path d="M165.5,146.3L169.7,145.9L171.9,150.7L173.4,156.3L174.9,160.5L175.3,166.5L172.7,167.7L173.1,162.4L171.2,158.1L168.2,153.2L164.4,150.7Z"/>
<path d="M97.5,95.7L101.2,91.0L106.9,86.2L114.4,83.7L123.8,81.3L127.6,82.9L120.0,87.8L114.4,93.3L108.8,96.4L103.1,98.0Z"/>
<path d="M67.4,52.3L73.0,53.3L76.8,45.7L84.3,42.8L88.1,45.7L93.7,48.6L95.2,53.3L90.0,57.0L85.1,55.1L87.0,63.3L80.6,64.1L78.7,57.9L74.2,61.5L73.0,56.0Z"/>
<path d="M158.4,150.7L161.4,150.7L163.3,156.3L165.9,160.5L168.9,167.1L167.0,168.3L165.2,164.2L162.2,159.3L159.5,155.0Z"/>
<path d="M150.1,118.7L155.4,118.7L154.6,129.1L150.9,128.4Z"/>
<path d="M267.4,45.7L274.2,45.7L276.1,52.3L270.4,54.2Z"/>
<path d="M267.4,60.6L272.3,60.6L273.1,65.9L268.6,65.0Z"/>
<path d="M118.2,113.7L127.6,107.8L138.8,109.3L127.6,111.5Z"/>
<path d="M657.0,390.8L658.8,387.0L664.9,387.0L665.6,391.6L663.0,397.2L657.7,396.8L656.6,393.4Z"/>
<path d="M647.6,400.6L649.4,404.7L652.8,418.0L654.3,420.6L651.3,416.1L647.6,406.6Z"/>
<path d="M665.2,424.1L667.9,429.4L669.0,439.0L669.8,442.1L667.1,439.0L666.0,429.4Z"/>
<path d="M651.3,104.1L654.7,96.4L660.7,94.9L660.7,101.8L655.8,104.1Z"/>
<path d="M667.1,96.4L669.8,84.5L672.8,88.6L672.0,96.4Z"/>
<path d="M584.0,115.1L588.2,109.3L590.0,112.9L586.3,115.8Z"/>
<path d="M267.1,353.1L269.7,347.3L270.4,350.8Z"/>
<path d="M214.4,342.0L218.2,345.8L216.3,345.4Z"/>
<path d="M274.2,446.0L278.0,450.3L275.7,449.5Z"/>
</g>
<text x="173.9" y="179.3" text-anchor="middle" textLength="70.4" lengthAdjust="spacingAndGlyphs" letter-spacing="0.6" font-family='"Liberation Sans", sans-serif' font-weight="700" font-size="17.3" fill="#8b9ca8" stroke="#fafaf8" stroke-width="2.2" paint-order="stroke" stroke-linejoin="round">NORTH</text>
<text x="174.0" y="201.9" text-anchor="middle" textLength="92.0" lengthAdjust="spacingAndGlyphs" letter-spacing="0.6" font-family='"Liberation Sans", sans-serif' font-weight="700" font-size="17.3" fill="#8b9ca8" stroke="#fafaf8" stroke-width="2.2" paint-order="stroke" stroke-linejoin="round">AMERICA</text>
<text x="307.1" y="436.2" text-anchor="middle" textLength="68.1" lengthAdjust="spacingAndGlyphs" letter-spacing="0.6" font-family='"Liberation Sans", sans-serif' font-weight="700" font-size="17.3" fill="#8b9ca8" stroke="#fafaf8" stroke-width="2.2" paint-order="stroke" stroke-linejoin="round">SOUTH</text>
<text x="307.6" y="458.5" text-anchor="middle" textLength="91.8" lengthAdjust="spacingAndGlyphs" letter-spacing="0.6" font-family='"Liberation Sans", sans-serif' font-weight="700" font-size="17.3" fill="#8b9ca8" stroke="#fafaf8" stroke-width="2.2" paint-order="stroke" stroke-linejoin="round">AMERICA</text>
<text x="643.0" y="360.5" text-anchor="middle" textLength="72.0" lengthAdjust="spacingAndGlyphs" letter-spacing="0.6" font-family='"Liberation Sans", sans-serif' font-weight="700" font-size="17.3" fill="#8b9ca8" stroke="#fafaf8" stroke-width="2.2" paint-order="stroke" stroke-linejoin="round">AFRICA</text>
<circle cx="554.7" cy="159.0" r="4.95" fill="rgba(50,116,217,0.64)" stroke="rgba(45,110,215,1)" stroke-width="1.4"/>
<circle cx="561.3" cy="170.8" r="4.95" fill="rgba(50,116,217,0.64)" stroke="rgba(45,110,215,1)" stroke-width="1.4"/>
<circle cx="570.1" cy="171.5" r="4.95" fill="rgba(50,116,217,0.64)" stroke="rgba(45,110,215,1)" stroke-width="1.4"/>
<circle cx="597.9" cy="177.4" r="4.95" fill="rgba(50,116,217,0.64)" stroke="rgba(45,110,215,1)" stroke-width="1.4"/>
<circle cx="598.3" cy="177.9" r="4.95" fill="rgba(50,116,217,0.64)" stroke="rgba(45,110,215,1)" stroke-width="1.4"/>
<circle cx="599.0" cy="179.0" r="4.95" fill="rgba(50,116,217,0.64)" stroke="rgba(45,110,215,1)" stroke-width="1.4"/>
<circle cx="600.0" cy="180.6" r="4.95" fill="rgba(50,116,217,0.64)" stroke="rgba(45,110,215,1)" stroke-width="1.4"/>
<circle cx="600.6" cy="181.8" r="4.95" fill="rgba(50,116,217,0.64)" stroke="rgba(45,110,215,1)" stroke-width="1.4"/>
<circle cx="601.4" cy="182.9" r="4.95" fill="rgba(50,116,217,0.64)" stroke="rgba(45,110,215,1)" stroke-width="1.4"/>
<circle cx="601.0" cy="182.3" r="4.95" fill="rgba(50,116,217,0.64)" stroke="rgba(45,110,215,1)" stroke-width="1.4"/>
<circle cx="598.1" cy="177.7" r="4.95" fill="rgba(50,116,217,0.64)" stroke="rgba(45,110,215,1)" stroke-width="1.4"/>
<circle cx="564.6" cy="204.4" r="4.95" fill="rgba(50,116,217,0.64)" stroke="rgba(45,110,215,1)" stroke-width="1.4"/>
<circle cx="557.8" cy="212.2" r="4.95" fill="rgba(50,116,217,0.64)" stroke="rgba(45,110,215,1)" stroke-width="1.4"/>
<circle cx="572.4" cy="209.8" r="4.95" fill="rgba(50,116,217,0.64)" stroke="rgba(45,110,215,1)" stroke-width="1.4"/>
<circle cx="252.2" cy="224.7" r="4.95" fill="rgba(50,116,217,0.64)" stroke="rgba(45,110,215,1)" stroke-width="1.4"/>
<circle cx="252.0" cy="224.5" r="4.95" fill="rgba(50,116,217,0.64)" stroke="rgba(45,110,215,1)" stroke-width="1.4"/>
<circle cx="252.5" cy="225.0" r="4.95" fill="rgba(50,116,217,0.64)" stroke="rgba(45,110,215,1)" stroke-width="1.4"/>
<circle cx="252.3" cy="224.6" r="4.95" fill="rgba(50,116,217,0.64)" stroke="rgba(45,110,215,1)" stroke-width="1.4"/>
<circle cx="252.1" cy="225.0" r="4.95" fill="rgba(50,116,217,0.64)" stroke="rgba(45,110,215,1)" stroke-width="1.4"/>
<path d="M602.4,94.1L606.8,102.2L598.0,102.2Z" fill="rgba(224,47,68,0.72)" stroke="#e02f44" stroke-width="1.1" stroke-linejoin="round"/>
<path d="M514.1,144.5L518.5,152.6L509.7,152.6Z" fill="rgba(224,47,68,0.72)" stroke="#e02f44" stroke-width="1.1" stroke-linejoin="round"/>
<path d="M555.9,150.8L560.3,158.9L551.5,158.9Z" fill="rgba(224,47,68,0.72)" stroke="#e02f44" stroke-width="1.1" stroke-linejoin="round"/>
<path d="M545.7,185.3L550.1,193.4L541.3,193.4Z" fill="rgba(224,47,68,0.72)" stroke="#e02f44" stroke-width="1.1" stroke-linejoin="round"/>
<path d="M75.6,229.8L80.0,237.9L71.2,237.9Z" fill="rgba(224,47,68,0.72)" stroke="#e02f44" stroke-width="1.1" stroke-linejoin="round"/>
<path d="M166.0,267.1L170.4,275.2L161.6,275.2Z" fill="rgba(224,47,68,0.72)" stroke="#e02f44" stroke-width="1.1" stroke-linejoin="round"/>
<path d="M242.3,233.9L246.7,242.0L237.9,242.0Z" fill="rgba(224,47,68,0.72)" stroke="#e02f44" stroke-width="1.1" stroke-linejoin="round"/>
</svg>
<div style="position:absolute;left:27.3px;top:271.8px;width:22.5px;height:45.4px;background:rgba(255,255,255,.55);border-radius:4px;"></div>
<div style="position:absolute;left:28.2px;top:272.7px;width:20.7px;height:20.9px;background:#dcdddd;border-radius:3px 3px 0 0;"></div>
<div style="position:absolute;left:28.2px;top:295.2px;width:20.7px;height:20.6px;background:#dcdddd;border-radius:0 0 3px 3px;"></div>
<div style="position:absolute;left:34.1px;top:282.7px;width:8.3px;height:1.9px;background:#25292e;"></div>
<div style="position:absolute;left:37.3px;top:279.5px;width:1.9px;height:8.3px;background:#25292e;"></div>
<div style="position:absolute;left:34.1px;top:305.0px;width:8.3px;height:1.9px;background:#25292e;"></div>
<div style="position:absolute;left:707px;top:732px;width:23.1px;height:23.9px;background:rgba(255,255,255,.9);border-radius:4px;"></div>
<div style="position:absolute;left:708.2px;top:733.2px;width:20.7px;height:21.2px;background:#dcdddd;border-radius:3px;"></div>
<div style="position:absolute;left:28px;top:604px;width:164.7px;height:73.2px;background:#f4f5f5;border-bottom:2px solid #8e9296;"></div>
<div style="position:absolute;left:28px;top:679.3px;width:164.7px;height:73.0px;background:#f4f5f5;border-bottom:2px solid #8e9296;"></div>
<div style="position:absolute;left:49.7px;top:644.6px;width:16.4px;height:16.4px;background:#a5bfec;border-radius:50%;"></div>
<svg style="position:absolute;left:48px;top:719px;width:20px;height:18px" viewBox="0 0 20 18"><path d="M9.9,2.9L17.4,15.3L2.4,15.3Z" fill="none" stroke="#f0a1ab" stroke-width="1.2" stroke-linejoin="round"/></svg>
<svg class="i" viewBox="0 0 24 24" style="left:1371.97px;top:20.27px;width:17.2px;height:17.2px;"><path fill="#24292e" d="M10,13H3a1,1,0,0,0-1,1v7a1,1,0,0,0,1,1h7a1,1,0,0,0,1-1V14A1,1,0,0,0,10,13ZM9,20H4V15H9ZM21,2H14a1,1,0,0,0-1,1v7a1,1,0,0,0,1,1h7a1,1,0,0,0,1-1V3A1,1,0,0,0,21,2ZM20,9H15V4h5Zm1,4H14a1,1,0,0,0-1,1v7a1,1,0,0,0,1,1h7a1,1,0,0,0,1-1V14A1,1,0,0,0,21,13Zm-1,7H15V15h5ZM10,2H3A1,1,0,0,0,2,3v7a1,1,0,0,0,1,1h7a1,1,0,0,0,1-1V3A1,1,0,0,0,10,2ZM9,9H4V4H9Z"/></svg>
<svg class="i" viewBox="0 0 24 24" style="left:1473.83px;top:20.70px;width:17.6px;height:17.6px;"><path fill="#24292e" d="M3,8H21a1,1,0,0,0,0-2H3A1,1,0,0,0,3,8Zm18,8H3a1,1,0,0,0,0,2H21a1,1,0,0,0,0-2Zm0-5H3a1,1,0,0,0,0,2H21a1,1,0,0,0,0-2Z"/></svg>
<svg class="i" viewBox="0 0 24 24" style="left:853.10px;top:110.90px;width:17.6px;height:17.6px;"><path fill="#4b5056" d="M12,2A10,10,0,1,0,22,12,10.01114,10.01114,0,0,0,12,2Zm0,18a8,8,0,1,1,8-8A8.00917,8.00917,0,0,1,12,20Zm0-8.5a1,1,0,0,0-1,1v3a1,1,0,0,0,2,0v-3A1,1,0,0,0,12,11.5Zm0-4a1.25,1.25,0,1,0,1.25,1.25A1.25,1.25,0,0,0,12,7.5Z"/></svg>
<svg class="i" viewBox="0 0 24 24" style="left:920.23px;top:154.23px;width:17.6px;height:17.6px;"><path fill="#7b7f85" d="M19,2H5A3,3,0,0,0,2,5V6.17a3,3,0,0,0,.25,1.2l0,.06a2.81,2.81,0,0,0,.59.86L9,14.41V21a1,1,0,0,0,.47.85A1,1,0,0,0,10,22a1,1,0,0,0,.45-.11l4-2A1,1,0,0,0,15,19V14.41l6.12-6.12a2.81,2.81,0,0,0,.59-.86l0-.06A3,3,0,0,0,22,6.17V5A3,3,0,0,0,19,2ZM13.29,13.29A1,1,0,0,0,13,14v4.38l-2,1V14a1,1,0,0,0-.29-.71L5.41,8H18.59ZM20,6H4V5A1,1,0,0,1,5,4H19a1,1,0,0,1,1,1Z"/></svg>
<svg class="i" viewBox="0 0 24 24" style="left:1120.43px;top:154.23px;width:17.6px;height:17.6px;"><path fill="#7b7f85" d="M19,2H5A3,3,0,0,0,2,5V6.17a3,3,0,0,0,.25,1.2l0,.06a2.81,2.81,0,0,0,.59.86L9,14.41V21a1,1,0,0,0,.47.85A1,1,0,0,0,10,22a1,1,0,0,0,.45-.11l4-2A1,1,0,0,0,15,19V14.41l6.12-6.12a2.81,2.81,0,0,0,.59-.86l0-.06A3,3,0,0,0,22,6.17V5A3,3,0,0,0,19,2ZM13.29,13.29A1,1,0,0,0,13,14v4.38l-2,1V14a1,1,0,0,0-.29-.71L5.41,8H18.59ZM20,6H4V5A1,1,0,0,1,5,4H19a1,1,0,0,1,1,1Z"/></svg>
<svg class="i" viewBox="0 0 24 24" style="left:1306.23px;top:154.23px;width:17.6px;height:17.6px;"><path fill="#7b7f85" d="M19,2H5A3,3,0,0,0,2,5V6.17a3,3,0,0,0,.25,1.2l0,.06a2.81,2.81,0,0,0,.59.86L9,14.41V21a1,1,0,0,0,.47.85A1,1,0,0,0,10,22a1,1,0,0,0,.45-.11l4-2A1,1,0,0,0,15,19V14.41l6.12-6.12a2.81,2.81,0,0,0,.59-.86l0-.06A3,3,0,0,0,22,6.17V5A3,3,0,0,0,19,2ZM13.29,13.29A1,1,0,0,0,13,14v4.38l-2,1V14a1,1,0,0,0-.29-.71L5.41,8H18.59ZM20,6H4V5A1,1,0,0,1,5,4H19a1,1,0,0,1,1,1Z"/></svg>
<div style="position:absolute;left:1588.13px;top:154.23px;width:4.87px;height:17.6px;overflow:hidden"><svg viewBox="0 0 24 24" style="position:absolute;left:0;top:0;width:17.6px;height:17.6px"><path fill="#7b7f85" d="M19,2H5A3,3,0,0,0,2,5V6.17a3,3,0,0,0,.25,1.2l0,.06a2.81,2.81,0,0,0,.59.86L9,14.41V21a1,1,0,0,0,.47.85A1,1,0,0,0,10,22a1,1,0,0,0,.45-.11l4-2A1,1,0,0,0,15,19V14.41l6.12-6.12a2.81,2.81,0,0,0,.59-.86l0-.06A3,3,0,0,0,22,6.17V5A3,3,0,0,0,19,2ZM13.29,13.29A1,1,0,0,0,13,14v4.38l-2,1V14a1,1,0,0,0-.29-.71L5.41,8H18.59ZM20,6H4V5A1,1,0,0,1,5,4H19a1,1,0,0,1,1,1Z"/></svg></div>
<svg class="i" viewBox="0 0 24 24" style="left:23.46px;top:781.07px;width:19.0px;height:19.0px;"><path fill="#24292e" d="M17,9.17a1,1,0,0,0-1.41,0L12,12.71,8.46,9.17a1,1,0,0,0-1.41,0,1,1,0,0,0,0,1.42l4.24,4.24a1,1,0,0,0,1.42,0L17,10.59A1,1,0,0,0,17,9.17Z"/></svg>
<svg class="i" viewBox="0 0 24 24" style="left:254.80px;top:824.05px;width:17.6px;height:17.6px;"><path fill="#4b5056" d="M12,2A10,10,0,1,0,22,12,10.01114,10.01114,0,0,0,12,2Zm0,18a8,8,0,1,1,8-8A8.00917,8.00917,0,0,1,12,20Zm0-8.5a1,1,0,0,0-1,1v3a1,1,0,0,0,2,0v-3A1,1,0,0,0,12,11.5Zm0-4a1.25,1.25,0,1,0,1.25,1.25A1.25,1.25,0,0,0,12,7.5Z"/></svg>
<svg class="i" viewBox="0 0 24 24" style="left:141.93px;top:866.73px;width:17.6px;height:17.6px;"><path fill="#7b7f85" d="M19,2H5A3,3,0,0,0,2,5V6.17a3,3,0,0,0,.25,1.2l0,.06a2.81,2.81,0,0,0,.59.86L9,14.41V21a1,1,0,0,0,.47.85A1,1,0,0,0,10,22a1,1,0,0,0,.45-.11l4-2A1,1,0,0,0,15,19V14.41l6.12-6.12a2.81,2.81,0,0,0,.59-.86l0-.06A3,3,0,0,0,22,6.17V5A3,3,0,0,0,19,2ZM13.29,13.29A1,1,0,0,0,13,14v4.38l-2,1V14a1,1,0,0,0-.29-.71L5.41,8H18.59ZM20,6H4V5A1,1,0,0,1,5,4H19a1,1,0,0,1,1,1Z"/></svg>
<svg class="i" viewBox="0 0 24 24" style="left:366.03px;top:866.73px;width:17.6px;height:17.6px;"><path fill="#7b7f85" d="M19,2H5A3,3,0,0,0,2,5V6.17a3,3,0,0,0,.25,1.2l0,.06a2.81,2.81,0,0,0,.59.86L9,14.41V21a1,1,0,0,0,.47.85A1,1,0,0,0,10,22a1,1,0,0,0,.45-.11l4-2A1,1,0,0,0,15,19V14.41l6.12-6.12a2.81,2.81,0,0,0,.59-.86l0-.06A3,3,0,0,0,22,6.17V5A3,3,0,0,0,19,2ZM13.29,13.29A1,1,0,0,0,13,14v4.38l-2,1V14a1,1,0,0,0-.29-.71L5.41,8H18.59ZM20,6H4V5A1,1,0,0,1,5,4H19a1,1,0,0,1,1,1Z"/></svg>
<svg class="i" viewBox="0 0 24 24" style="left:489.23px;top:866.73px;width:17.6px;height:17.6px;"><path fill="#7b7f85" d="M19,2H5A3,3,0,0,0,2,5V6.17a3,3,0,0,0,.25,1.2l0,.06a2.81,2.81,0,0,0,.59.86L9,14.41V21a1,1,0,0,0,.47.85A1,1,0,0,0,10,22a1,1,0,0,0,.45-.11l4-2A1,1,0,0,0,15,19V14.41l6.12-6.12a2.81,2.81,0,0,0,.59-.86l0-.06A3,3,0,0,0,22,6.17V5A3,3,0,0,0,19,2ZM13.29,13.29A1,1,0,0,0,13,14v4.38l-2,1V14a1,1,0,0,0-.29-.71L5.41,8H18.59ZM20,6H4V5A1,1,0,0,1,5,4H19a1,1,0,0,1,1,1Z"/></svg>
<svg class="i" viewBox="0 0 24 24" style="left:667.13px;top:866.73px;width:17.6px;height:17.6px;"><path fill="#7b7f85" d="M19,2H5A3,3,0,0,0,2,5V6.17a3,3,0,0,0,.25,1.2l0,.06a2.81,2.81,0,0,0,.59.86L9,14.41V21a1,1,0,0,0,.47.85A1,1,0,0,0,10,22a1,1,0,0,0,.45-.11l4-2A1,1,0,0,0,15,19V14.41l6.12-6.12a2.81,2.81,0,0,0,.59-.86l0-.06A3,3,0,0,0,22,6.17V5A3,3,0,0,0,19,2ZM13.29,13.29A1,1,0,0,0,13,14v4.38l-2,1V14a1,1,0,0,0-.29-.71L5.41,8H18.59ZM20,6H4V5A1,1,0,0,1,5,4H19a1,1,0,0,1,1,1Z"/></svg>
<svg class="i" viewBox="0 0 24 24" style="left:1113.80px;top:824.05px;width:17.6px;height:17.6px;"><path fill="#4b5056" d="M12,2A10,10,0,1,0,22,12,10.01114,10.01114,0,0,0,12,2Zm0,18a8,8,0,1,1,8-8A8.00917,8.00917,0,0,1,12,20Zm0-8.5a1,1,0,0,0-1,1v3a1,1,0,0,0,2,0v-3A1,1,0,0,0,12,11.5Zm0-4a1.25,1.25,0,1,0,1.25,1.25A1.25,1.25,0,0,0,12,7.5Z"/></svg>
<svg class="i" viewBox="0 0 24 24" style="left:872.03px;top:866.73px;width:17.6px;height:17.6px;"><path fill="#7b7f85" d="M19,2H5A3,3,0,0,0,2,5V6.17a3,3,0,0,0,.25,1.2l0,.06a2.81,2.81,0,0,0,.59.86L9,14.41V21a1,1,0,0,0,.47.85A1,1,0,0,0,10,22a1,1,0,0,0,.45-.11l4-2A1,1,0,0,0,15,19V14.41l6.12-6.12a2.81,2.81,0,0,0,.59-.86l0-.06A3,3,0,0,0,22,6.17V5A3,3,0,0,0,19,2ZM13.29,13.29A1,1,0,0,0,13,14v4.38l-2,1V14a1,1,0,0,0-.29-.71L5.41,8H18.59ZM20,6H4V5A1,1,0,0,1,5,4H19a1,1,0,0,1,1,1Z"/></svg>
<svg class="i" viewBox="0 0 24 24" style="left:1096.03px;top:866.73px;width:17.6px;height:17.6px;"><path fill="#7b7f85" d="M19,2H5A3,3,0,0,0,2,5V6.17a3,3,0,0,0,.25,1.2l0,.06a2.81,2.81,0,0,0,.59.86L9,14.41V21a1,1,0,0,0,.47.85A1,1,0,0,0,10,22a1,1,0,0,0,.45-.11l4-2A1,1,0,0,0,15,19V14.41l6.12-6.12a2.81,2.81,0,0,0,.59-.86l0-.06A3,3,0,0,0,22,6.17V5A3,3,0,0,0,19,2ZM13.29,13.29A1,1,0,0,0,13,14v4.38l-2,1V14a1,1,0,0,0-.29-.71L5.41,8H18.59ZM20,6H4V5A1,1,0,0,1,5,4H19a1,1,0,0,1,1,1Z"/></svg>
<svg class="i" viewBox="0 0 24 24" style="left:1219.23px;top:866.73px;width:17.6px;height:17.6px;"><path fill="#7b7f85" d="M19,2H5A3,3,0,0,0,2,5V6.17a3,3,0,0,0,.25,1.2l0,.06a2.81,2.81,0,0,0,.59.86L9,14.41V21a1,1,0,0,0,.47.85A1,1,0,0,0,10,22a1,1,0,0,0,.45-.11l4-2A1,1,0,0,0,15,19V14.41l6.12-6.12a2.81,2.81,0,0,0,.59-.86l0-.06A3,3,0,0,0,22,6.17V5A3,3,0,0,0,19,2ZM13.29,13.29A1,1,0,0,0,13,14v4.38l-2,1V14a1,1,0,0,0-.29-.71L5.41,8H18.59ZM20,6H4V5A1,1,0,0,1,5,4H19a1,1,0,0,1,1,1Z"/></svg>
<svg class="i" viewBox="0 0 24 24" style="left:1397.03px;top:866.73px;width:17.6px;height:17.6px;"><path fill="#7b7f85" d="M19,2H5A3,3,0,0,0,2,5V6.17a3,3,0,0,0,.25,1.2l0,.06a2.81,2.81,0,0,0,.59.86L9,14.41V21a1,1,0,0,0,.47.85A1,1,0,0,0,10,22a1,1,0,0,0,.45-.11l4-2A1,1,0,0,0,15,19V14.41l6.12-6.12a2.81,2.81,0,0,0,.59-.86l0-.06A3,3,0,0,0,22,6.17V5A3,3,0,0,0,19,2ZM13.29,13.29A1,1,0,0,0,13,14v4.38l-2,1V14a1,1,0,0,0-.29-.71L5.41,8H18.59ZM20,6H4V5A1,1,0,0,1,5,4H19a1,1,0,0,1,1,1Z"/></svg>
<svg class="i" viewBox="0 0 24 24" style="left:1500.83px;top:866.73px;width:17.6px;height:17.6px;"><path fill="#7b7f85" d="M19,2H5A3,3,0,0,0,2,5V6.17a3,3,0,0,0,.25,1.2l0,.06a2.81,2.81,0,0,0,.59.86L9,14.41V21a1,1,0,0,0,.47.85A1,1,0,0,0,10,22a1,1,0,0,0,.45-.11l4-2A1,1,0,0,0,15,19V14.41l6.12-6.12a2.81,2.81,0,0,0,.59-.86l0-.06A3,3,0,0,0,22,6.17V5A3,3,0,0,0,19,2ZM13.29,13.29A1,1,0,0,0,13,14v4.38l-2,1V14a1,1,0,0,0-.29-.71L5.41,8H18.59ZM20,6H4V5A1,1,0,0,1,5,4H19a1,1,0,0,1,1,1Z"/></svg>
<span class="t" style="left:1393.70px;top:20.47px;font-size:12.5px;line-height:16px;color:#24292e;letter-spacing:1.536px;-webkit-text-stroke:0.12px #24292e;">Home</span>
<span class="t" style="left:1495.70px;top:20.47px;font-size:12.5px;line-height:16px;color:#24292e;letter-spacing:0.990px;-webkit-text-stroke:0.12px #24292e;">Related Views</span>
<span class="t" style="left:50.10px;top:117.78px;font-size:24.6px;line-height:31px;color:#fff;letter-spacing:0.866px;-webkit-text-stroke:0.3px #fff;">Call Start:</span>
<span class="t" style="left:42.50px;top:147.94px;font-size:22.4px;line-height:28px;color:#fff;letter-spacing:1.274px;-webkit-text-stroke:0.3px #fff;">02/14/2024,</span>
<span class="t" style="left:40.60px;top:173.84px;font-size:22.4px;line-height:28px;color:#fff;letter-spacing:1.271px;-webkit-text-stroke:0.3px #fff;">02:29:04</span>
<span class="t" style="left:141.40px;top:173.84px;font-size:22.4px;line-height:28px;color:#fff;letter-spacing:1.066px;-webkit-text-stroke:0.3px #fff;">PM</span>
<span class="t" style="left:237.40px;top:117.78px;font-size:24.6px;line-height:31px;color:#fff;letter-spacing:0.393px;-webkit-text-stroke:0.3px #fff;">Call End:</span>
<span class="t" style="left:223.10px;top:147.94px;font-size:22.4px;line-height:28px;color:#fff;letter-spacing:1.264px;-webkit-text-stroke:0.3px #fff;">02/14/2024,</span>
<span class="t" style="left:221.30px;top:173.84px;font-size:22.4px;line-height:28px;color:#fff;letter-spacing:1.242px;-webkit-text-stroke:0.3px #fff;">04:47:04</span>
<span class="t" style="left:321.80px;top:173.84px;font-size:22.4px;line-height:28px;color:#fff;letter-spacing:1.166px;-webkit-text-stroke:0.3px #fff;">PM</span>
<span class="t" style="left:444.30px;top:117.78px;font-size:24.6px;line-height:31px;color:#fff;letter-spacing:0.820px;-webkit-text-stroke:0.3px #fff;">Type</span>
<span class="t" style="left:437.70px;top:147.94px;font-size:22.4px;line-height:28px;color:#fff;letter-spacing:0.637px;-webkit-text-stroke:0.3px #fff;">Teams</span>
<span class="t" style="left:393.50px;top:173.84px;font-size:22.4px;line-height:28px;color:#fff;letter-spacing:0.941px;-webkit-text-stroke:0.3px #fff;">Meeting/Event</span>
<span class="t" style="left:574.50px;top:117.08px;font-size:24.6px;line-height:31px;color:#fff;letter-spacing:1.017px;-webkit-text-stroke:0.3px #fff;">Attendee</span>
<span class="t" style="left:573.50px;top:145.68px;font-size:24.6px;line-height:31px;color:#fff;letter-spacing:1.195px;-webkit-text-stroke:0.3px #fff;">Count:</span>
<span class="t" style="left:636.90px;top:175.24px;font-size:22.4px;line-height:28px;color:#fff;letter-spacing:-0.353px;-webkit-text-stroke:0.3px #fff;">13</span>
<span class="t" style="left:28.00px;top:237.11px;font-size:14.1px;line-height:18px;color:#24292e;letter-spacing:1.304px;-webkit-text-stroke:0.22px #24292e;">Attendee and Relay Locations</span>
<span class="t" style="left:758.10px;top:110.71px;font-size:14.1px;line-height:18px;color:#24292e;letter-spacing:1.585px;-webkit-text-stroke:0.22px #24292e;">Attendees</span>
<span class="t" style="left:764.90px;top:153.31px;font-size:14.1px;line-height:18px;color:#24292e;letter-spacing:1.172px;-webkit-text-stroke:0.22px #24292e;">Caller Display Name</span>
<span class="t" style="left:958.20px;top:153.31px;font-size:14.1px;line-height:18px;color:#24292e;letter-spacing:1.148px;-webkit-text-stroke:0.22px #24292e;">Open Real Time Data</span>
<span class="t" style="left:1165.40px;top:153.31px;font-size:14.1px;line-height:18px;color:#24292e;letter-spacing:1.275px;-webkit-text-stroke:0.22px #24292e;">Open User Details</span>
<span class="t" style="left:1407.70px;top:153.31px;font-size:14.1px;line-height:18px;color:#24292e;letter-spacing:1.378px;-webkit-text-stroke:0.22px #24292e;width:185.30px;overflow:hidden;">Worst Quality Segment</span>
<span class="t" style="left:765.30px;top:189.21px;font-size:14.1px;line-height:18px;color:#3d4249;letter-spacing:1.144px;">June Cha</span>
<span class="t" style="left:1406.70px;top:189.21px;font-size:14.1px;line-height:18px;color:#fff;letter-spacing:1.748px;-webkit-text-stroke:0.35px #fff;">Degraded</span>
<span class="t" style="left:765.30px;top:228.96px;font-size:14.1px;line-height:18px;color:#3d4249;letter-spacing:1.308px;">Guest user - ed35</span>
<span class="t" style="left:1406.70px;top:228.96px;font-size:14.1px;line-height:18px;color:#fff;letter-spacing:1.781px;-webkit-text-stroke:0.35px #fff;">Impacted</span>
<span class="t" style="left:765.30px;top:268.71px;font-size:14.1px;line-height:18px;color:#3d4249;letter-spacing:1.316px;">Ambrose Dylan</span>
<span class="t" style="left:957.20px;top:268.71px;font-size:14.1px;line-height:18px;color:#1f62e0;letter-spacing:1.173px;-webkit-text-stroke:0.33px #1f62e0;">Real Time Data</span>
<span class="t" style="left:1165.50px;top:268.71px;font-size:14.1px;line-height:18px;color:#1f62e0;letter-spacing:1.396px;-webkit-text-stroke:0.33px #1f62e0;">dylan.ambrose@panagenda…</span>
<span class="t" style="left:1406.70px;top:268.71px;font-size:14.1px;line-height:18px;color:#fff;letter-spacing:1.781px;-webkit-text-stroke:0.35px #fff;">Impacted</span>
<span class="t" style="left:764.30px;top:308.46px;font-size:14.1px;line-height:18px;color:#3d4249;letter-spacing:1.532px;">Monroe Bond</span>
<span class="t" style="left:1407.70px;top:308.46px;font-size:14.1px;line-height:18px;color:#fff;letter-spacing:1.478px;-webkit-text-stroke:0.35px #fff;">Acceptable</span>
<span class="t" style="left:765.30px;top:348.21px;font-size:14.1px;line-height:18px;color:#3d4249;letter-spacing:1.255px;">Yadira Redmond</span>
<span class="t" style="left:1407.70px;top:348.21px;font-size:14.1px;line-height:18px;color:#fff;letter-spacing:1.478px;-webkit-text-stroke:0.35px #fff;">Acceptable</span>
<span class="t" style="left:764.30px;top:387.96px;font-size:14.1px;line-height:18px;color:#3d4249;letter-spacing:1.302px;">Kauffman Lyle</span>
<span class="t" style="left:1407.70px;top:387.96px;font-size:14.1px;line-height:18px;color:#fff;letter-spacing:1.478px;-webkit-text-stroke:0.35px #fff;">Acceptable</span>
<span class="t" style="left:764.30px;top:427.71px;font-size:14.1px;line-height:18px;color:#3d4249;letter-spacing:1.218px;">Rachel Leonard</span>
<span class="t" style="left:1407.70px;top:427.71px;font-size:14.1px;line-height:18px;color:#fff;letter-spacing:1.478px;-webkit-text-stroke:0.35px #fff;">Acceptable</span>
<span class="t" style="left:765.30px;top:467.46px;font-size:14.1px;line-height:18px;color:#3d4249;letter-spacing:1.096px;">Grace Gross</span>
<span class="t" style="left:1407.70px;top:467.46px;font-size:14.1px;line-height:18px;color:#fff;letter-spacing:1.478px;-webkit-text-stroke:0.35px #fff;">Acceptable</span>
<span class="t" style="left:765.30px;top:507.21px;font-size:14.1px;line-height:18px;color:#3d4249;letter-spacing:1.161px;">Olivia Jacobs</span>
<span class="t" style="left:1407.70px;top:507.21px;font-size:14.1px;line-height:18px;color:#fff;letter-spacing:1.478px;-webkit-text-stroke:0.35px #fff;">Acceptable</span>
<span class="t" style="left:765.30px;top:546.96px;font-size:14.1px;line-height:18px;color:#3d4249;letter-spacing:0.945px;">Avalon Carey</span>
<span class="t" style="left:957.20px;top:546.96px;font-size:14.1px;line-height:18px;color:#1f62e0;letter-spacing:1.173px;-webkit-text-stroke:0.33px #1f62e0;">Real Time Data</span>
<span class="t" style="left:1165.50px;top:546.96px;font-size:14.1px;line-height:18px;color:#1f62e0;letter-spacing:1.286px;-webkit-text-stroke:0.33px #1f62e0;">avalon.carey@panagenda.c…</span>
<span class="t" style="left:1407.70px;top:546.96px;font-size:14.1px;line-height:18px;color:#fff;letter-spacing:1.478px;-webkit-text-stroke:0.35px #fff;">Acceptable</span>
<span class="t" style="left:764.30px;top:586.71px;font-size:14.1px;line-height:18px;color:#3d4249;letter-spacing:1.222px;">Rosalee Melvin</span>
<span class="t" style="left:957.20px;top:586.71px;font-size:14.1px;line-height:18px;color:#1f62e0;letter-spacing:1.173px;-webkit-text-stroke:0.33px #1f62e0;">Real Time Data</span>
<span class="t" style="left:1165.50px;top:586.71px;font-size:14.1px;line-height:18px;color:#1f62e0;letter-spacing:1.275px;-webkit-text-stroke:0.33px #1f62e0;">rosalee.melvin@panagenda.…</span>
<span class="t" style="left:1407.70px;top:586.71px;font-size:14.1px;line-height:18px;color:#fff;letter-spacing:1.478px;-webkit-text-stroke:0.35px #fff;">Acceptable</span>
<span class="t" style="left:764.30px;top:626.46px;font-size:14.1px;line-height:18px;color:#3d4249;letter-spacing:1.505px;">Mercy Law</span>
<span class="t" style="left:957.20px;top:626.46px;font-size:14.1px;line-height:18px;color:#1f62e0;letter-spacing:1.173px;-webkit-text-stroke:0.33px #1f62e0;">Real Time Data</span>
<span class="t" style="left:1165.50px;top:626.46px;font-size:14.1px;line-height:18px;color:#1f62e0;letter-spacing:1.571px;-webkit-text-stroke:0.33px #1f62e0;">mercy.law@panagenda.com</span>
<span class="t" style="left:1407.70px;top:626.46px;font-size:14.1px;line-height:18px;color:#fff;letter-spacing:1.478px;-webkit-text-stroke:0.35px #fff;">Acceptable</span>
<span class="t" style="left:764.30px;top:666.21px;font-size:14.1px;line-height:18px;color:#3d4249;letter-spacing:1.288px;">Rhys Hawkins</span>
<span class="t" style="left:957.20px;top:666.21px;font-size:14.1px;line-height:18px;color:#1f62e0;letter-spacing:1.173px;-webkit-text-stroke:0.33px #1f62e0;">Real Time Data</span>
<span class="t" style="left:1165.50px;top:666.21px;font-size:14.1px;line-height:18px;color:#1f62e0;letter-spacing:1.393px;-webkit-text-stroke:0.33px #1f62e0;">rhys.hawkins@panagenda.c…</span>
<span class="t" style="left:1407.70px;top:666.21px;font-size:14.1px;line-height:18px;color:#fff;letter-spacing:1.478px;-webkit-text-stroke:0.35px #fff;">Acceptable</span>
<span class="t" style="left:41.50px;top:778.70px;font-size:17.9px;line-height:22px;color:#24292e;letter-spacing:0.779px;-webkit-text-stroke:0.15px #24292e;">Impact of issues</span>
<span class="t" style="left:28.10px;top:823.86px;font-size:14.1px;line-height:18px;color:#24292e;letter-spacing:1.486px;-webkit-text-stroke:0.22px #24292e;">Attendees impacting others</span>
<span class="t" style="left:34.00px;top:865.81px;font-size:14.1px;line-height:18px;color:#24292e;letter-spacing:1.347px;-webkit-text-stroke:0.22px #24292e;">Display Name</span>
<span class="t" style="left:282.80px;top:865.81px;font-size:14.1px;line-height:18px;color:#24292e;letter-spacing:1.342px;-webkit-text-stroke:0.22px #24292e;">Teams Bot</span>
<span class="t" style="left:401.60px;top:865.81px;font-size:14.1px;line-height:18px;color:#24292e;letter-spacing:1.637px;-webkit-text-stroke:0.22px #24292e;">MediaType</span>
<span class="t" style="left:542.90px;top:865.81px;font-size:14.1px;line-height:18px;color:#24292e;letter-spacing:1.344px;-webkit-text-stroke:0.22px #24292e;">SegmentQuality</span>
<span class="t" style="left:697.40px;top:865.81px;font-size:14.1px;line-height:18px;color:#24292e;letter-spacing:1.616px;-webkit-text-stroke:0.22px #24292e;width:31.40px;overflow:hidden;">Direction</span>
<span class="t" style="left:35.60px;top:901.81px;font-size:14.1px;line-height:18px;color:#3d4249;letter-spacing:1.302px;">Guest user - ed35</span>
<span class="t" style="left:329.20px;top:901.81px;font-size:14.1px;line-height:18px;color:#3d4249;letter-spacing:0.000px;">-</span>
<span class="t" style="left:403.10px;top:901.81px;font-size:14.1px;line-height:18px;color:#3d4249;letter-spacing:1.337px;">Video</span>
<span class="t" style="left:613.50px;top:901.81px;font-size:14.1px;line-height:18px;color:#fff;letter-spacing:1.795px;-webkit-text-stroke:0.35px #fff;">Impacted</span>
<span class="t" style="left:698.40px;top:901.81px;font-size:14.1px;line-height:18px;color:#3d4249;letter-spacing:0.474px;width:30.40px;overflow:hidden;">Send</span>
<span class="t" style="left:35.60px;top:941.56px;font-size:14.1px;line-height:18px;color:#3d4249;letter-spacing:1.316px;">Ambrose Dylan</span>
<span class="t" style="left:329.20px;top:941.56px;font-size:14.1px;line-height:18px;color:#3d4249;letter-spacing:0.000px;">-</span>
<span class="t" style="left:403.10px;top:941.56px;font-size:14.1px;line-height:18px;color:#3d4249;letter-spacing:1.337px;">Video</span>
<span class="t" style="left:613.50px;top:941.56px;font-size:14.1px;line-height:18px;color:#fff;letter-spacing:1.795px;-webkit-text-stroke:0.35px #fff;">Impacted</span>
<span class="t" style="left:698.40px;top:941.56px;font-size:14.1px;line-height:18px;color:#3d4249;letter-spacing:0.474px;width:30.40px;overflow:hidden;">Send</span>
<span class="t" style="left:35.60px;top:981.31px;font-size:14.1px;line-height:18px;color:#3d4249;letter-spacing:1.144px;">June Cha</span>
<span class="t" style="left:329.20px;top:981.31px;font-size:14.1px;line-height:18px;color:#3d4249;letter-spacing:0.000px;">-</span>
<span class="t" style="left:403.10px;top:981.31px;font-size:14.1px;line-height:18px;color:#3d4249;letter-spacing:1.337px;">Video</span>
<span class="t" style="left:609.80px;top:981.31px;font-size:14.1px;line-height:18px;color:#fff;letter-spacing:1.762px;-webkit-text-stroke:0.35px #fff;">Degraded</span>
<span class="t" style="left:698.40px;top:981.31px;font-size:14.1px;line-height:18px;color:#3d4249;letter-spacing:0.474px;width:30.40px;overflow:hidden;">Send</span>
<span class="t" style="left:758.00px;top:823.86px;font-size:14.1px;line-height:18px;color:#24292e;letter-spacing:1.368px;-webkit-text-stroke:0.22px #24292e;">Attendees impacted by issues receiving data</span>
<span class="t" style="left:763.80px;top:865.81px;font-size:14.1px;line-height:18px;color:#24292e;letter-spacing:1.338px;-webkit-text-stroke:0.22px #24292e;">Display Name</span>
<span class="t" style="left:1012.50px;top:865.81px;font-size:14.1px;line-height:18px;color:#24292e;letter-spacing:1.417px;-webkit-text-stroke:0.22px #24292e;">Teams Bot</span>
<span class="t" style="left:1131.50px;top:865.81px;font-size:14.1px;line-height:18px;color:#24292e;letter-spacing:1.662px;-webkit-text-stroke:0.22px #24292e;">MediaType</span>
<span class="t" style="left:1272.90px;top:865.81px;font-size:14.1px;line-height:18px;color:#24292e;letter-spacing:1.336px;-webkit-text-stroke:0.22px #24292e;">SegmentQuality</span>
<span class="t" style="left:1427.50px;top:865.81px;font-size:14.1px;line-height:18px;color:#24292e;letter-spacing:1.616px;-webkit-text-stroke:0.22px #24292e;">Direction</span>
<span class="t" style="left:1543.40px;top:865.81px;font-size:14.1px;line-height:18px;color:#24292e;letter-spacing:1.578px;-webkit-text-stroke:0.22px #24292e;width:50.10px;overflow:hidden;">packet</span>
<span class="t" style="left:1198.00px;top:1040.01px;font-size:14.1px;line-height:18px;color:#50555c;letter-spacing:1.513px;">No data</span>
<span class="t" style="left:716.20px;top:733.08px;font-size:16.5px;line-height:21px;color:#25292e;letter-spacing:0.000px;font-weight:700;">i</span>
<span class="t" style="left:37.30px;top:616.11px;font-size:14.1px;line-height:18px;color:#3d4249;letter-spacing:1.340px;">Attendee Locations</span>
<span class="t" style="left:36.30px;top:690.81px;font-size:14.1px;line-height:18px;color:#3d4249;letter-spacing:1.176px;">Relay Locations</span>
</body></html>
